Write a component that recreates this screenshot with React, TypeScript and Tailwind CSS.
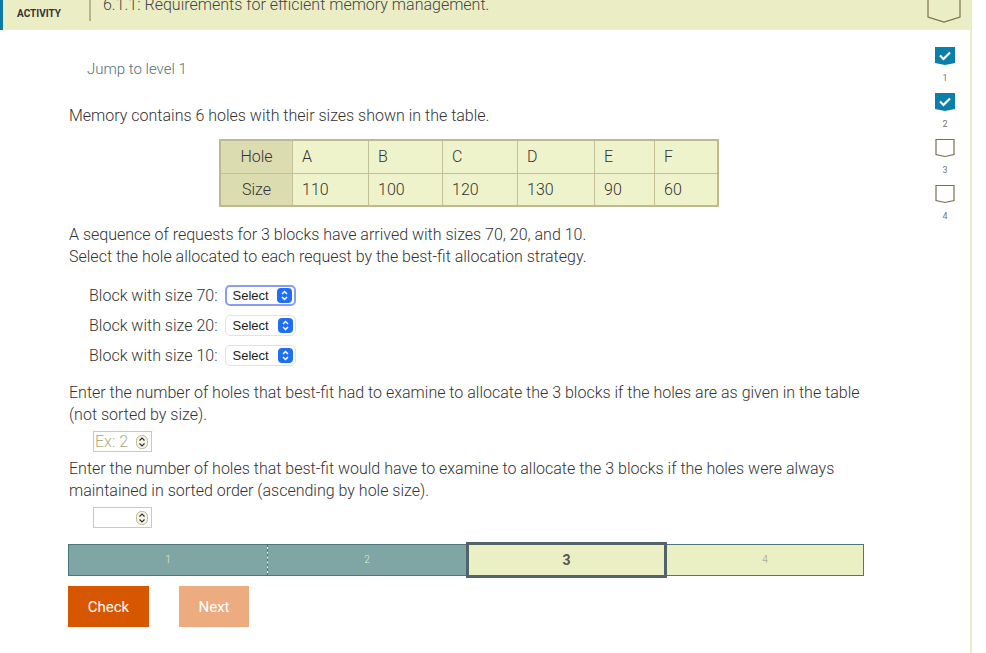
import React from 'react';

const holes = [
  { name: 'A', size: 110, w: 'w-[76px]' },
  { name: 'B', size: 100, w: 'w-[74px]' },
  { name: 'C', size: 120, w: 'w-[75px]' },
  { name: 'D', size: 130, w: 'w-[77px]' },
  { name: 'E', size: 90, w: 'w-[60px]' },
  { name: 'F', size: 60, w: 'w-[62px]' },
];

function LevelIcon({ done }: { done: boolean }) {
  if (done) {
    return (
      <svg width="22" height="20" viewBox="0 0 22 20">
        <path d="M1 1 H21 V17 L11 19 L1 17 Z" fill="#0b7ea9" />
        <path d="M6 9.5 L9.5 13 L16 6.5" fill="none" stroke="white" strokeWidth="2.2" />
      </svg>
    );
  }
  return (
    <svg width="22" height="20" viewBox="0 0 22 20">
      <path d="M2 1.5 H20 V16.5 L11 18.5 L2 16.5 Z" fill="white" stroke="#77714f" strokeWidth="1.2" />
    </svg>
  );
}

function FakeSelect({ focused = false }: { focused?: boolean }) {
  return (
    <div
      className={`flex items-center gap-[6px] h-[21px] w-[71px] pr-[2px] rounded-[5px] bg-white ${
        focused ? 'border-2 border-[#8d9cf0] pl-[6px]' : 'border border-[#e4e4d2] pl-[7px]'
      }`}
    >
      <span className="text-[13px] text-[#222] font-['Liberation_Sans',sans-serif]">Select</span>
      <span className="ml-auto flex h-[15px] w-[15px] items-center justify-center rounded-[4px] bg-[#1f6ff0]">
        <svg width="9" height="11" viewBox="0 0 9 11">
          <path d="M2 4 L4.5 1.5 L7 4 M2 7 L4.5 9.5 L7 7" fill="none" stroke="white" strokeWidth="1.5" />
        </svg>
      </span>
    </div>
  );
}

function Spinner() {
  return (
    <svg width="12" height="14" viewBox="0 0 12 14">
      <rect x="0.5" y="0.5" width="11" height="13" rx="5" fill="#f4f4e6" stroke="#b9b790" />
      <path d="M3.5 5.5 L6 3 L8.5 5.5 M3.5 8.5 L6 11 L8.5 8.5" fill="none" stroke="#333" strokeWidth="1.2" />
    </svg>
  );
}

function NumberInput({ placeholder }: { placeholder?: string }) {
  return (
    <div className="flex h-[21px] w-[59px] items-center border border-[#cfcba6] bg-white pl-[1px] pr-[3px]">
      <span className="text-[16px] leading-none text-[#aeab80]">{placeholder}</span>
      <span className="ml-auto flex">
        <Spinner />
      </span>
    </div>
  );
}

export default function App() {
  return (
    <div className="flex h-[653px] w-[986px] overflow-hidden bg-white font-['Roboto',sans-serif] text-[#333]">
      <div className="flex w-[972px] flex-col border-r-2 border-[#e9edc6]">
        {/* header bar */}
        <div className="relative flex h-[30px] shrink-0 items-start overflow-hidden border-l-[3px] border-[#0c7aa6] bg-[#ebeec4]">
          <span className="ml-[14px] mt-[6px] text-[10px] font-bold text-[#333]">ACTIVITY</span>
          <span className="ml-[28px] h-[21px] w-[2px] bg-[#b9b48a]" />
          <span className="ml-[12px] -mt-[5px] text-[16px] font-light leading-[20px] text-[#444]">
            6.1.1: Requirements for efficient memory management.
          </span>
          <span className="absolute -top-[2px] right-[9px]">
            <svg width="34" height="26" viewBox="0 0 34 26">
              <path d="M1 0 V19 L17 24 L33 19 V0" fill="none" stroke="#77714f" strokeWidth="1.2" />
            </svg>
          </span>
        </div>

        <div className="flex flex-1">
          {/* main content */}
          <div className="w-[864px] pl-[68px] text-[16px] font-light leading-[22px]">
            <div className="mt-[28px] pl-[19px] text-[15px] text-[#4f7278]">Jump to level 1</div>

            <p className="mt-[25px] pl-[1px]">Memory contains 6 holes with their sizes shown in the table.</p>

            <div className="mt-[12px] ml-[151px] flex w-fit flex-col border-2 border-[#bdbb8d] bg-[#eff3cb]">
              <div className="flex h-[33px] border-b border-[#c3c195]">
                <div className="flex w-[72px] items-center justify-center bg-[#dcdcb1] border-r border-[#c3c195]">Hole</div>
                {holes.map((h, i) => (
                  <div
                    key={h.name}
                    className={`flex items-center pl-[9px] ${h.w} ${i < holes.length - 1 ? 'border-r border-[#c3c195]' : ''}`}
                  >
                    {h.name}
                  </div>
                ))}
              </div>
              <div className="flex h-[31px]">
                <div className="flex w-[72px] items-center justify-center bg-[#dcdcb1] border-r border-[#c3c195]">Size</div>
                {holes.map((h, i) => (
                  <div
                    key={h.name}
                    className={`flex items-center pl-[9px] ${h.w} ${i < holes.length - 1 ? 'border-r border-[#c3c195]' : ''}`}
                  >
                    {h.size}
                  </div>
                ))}
              </div>
            </div>

            <p className="mt-[17px] pl-[1px]">
              A sequence of requests for 3 blocks have arrived with sizes 70, 20, and 10.
              <br />
              Select the hole allocated to each request by the best-fit allocation strategy.
            </p>

            <div className="mt-[17px] flex flex-col gap-[9px] pl-[21px]">
              {[70, 20, 10].map((s, i) => (
                <div key={s} className="flex h-[21px] items-center gap-[7px]">
                  <span>Block with size {s}:</span>
                  <FakeSelect focused={i === 0} />
                </div>
              ))}
            </div>

            <p className="mt-[16px] pl-[1px] pr-[2px]">
              Enter the number of holes that best-fit had to examine to allocate the 3 blocks if the holes are as given in the table
              (not sorted by size).
            </p>
            <div className="mt-[5px] pl-[25px]">
              <NumberInput placeholder="Ex: 2" />
            </div>

            <p className="mt-[6px] pl-[1px] pr-[2px]">
              Enter the number of holes that best-fit would have to examine to allocate the 3 blocks if the holes were always
              maintained in sorted order (ascending by hole size).
            </p>
            <div className="mt-[5px] pl-[25px]">
              <NumberInput />
            </div>

            {/* level progress */}
            <div className="mt-[16px] flex h-[32px] w-[796px] items-stretch">
              <div className="flex w-[199px] items-center justify-center border border-r-0 border-[#4e777b] bg-[#7fa6a5] text-[10px] text-[#e8ecc0]">
                1
              </div>
              <div className="border-l border-dashed border-[#4e777b]" />
              <div className="flex w-[198px] items-center justify-center border-y border-[#4e777b] bg-[#7fa6a5] text-[10px] text-[#e8ecc0]">
                2
              </div>
              <div className="-my-[2px] flex w-[201px] items-center justify-center border-[3px] border-[#52646a] bg-[#ebefc4] text-[14px] font-bold text-[#555]">
                3
              </div>
              <div className="flex flex-1 items-center justify-center border border-l-0 border-[#4e777b] bg-[#ebefc4] text-[10px] text-[#999]">
                4
              </div>
            </div>

            <div className="mt-[10px] flex gap-[30px]">
              <button className="h-[41px] w-[81px] bg-[#d75600] text-[15px] font-normal text-white">Check</button>
              <button className="h-[41px] w-[70px] bg-[#edab80] text-[15px] font-normal text-white">Next</button>
            </div>
          </div>

          {/* level sidebar */}
          <div className="flex flex-1 flex-col items-center pt-[16px] pr-[4px] pl-[60px]">
            {[1, 2, 3, 4].map((n) => (
              <div key={n} className="flex h-[46px] flex-col items-center">
                <LevelIcon done={n <= 2} />
                <span className="mt-[7px] text-[9px] leading-[10px] text-[#777]">{n}</span>
              </div>
            ))}
          </div>
        </div>
      </div>
      <div className="flex-1" />
    </div>
  );
}
